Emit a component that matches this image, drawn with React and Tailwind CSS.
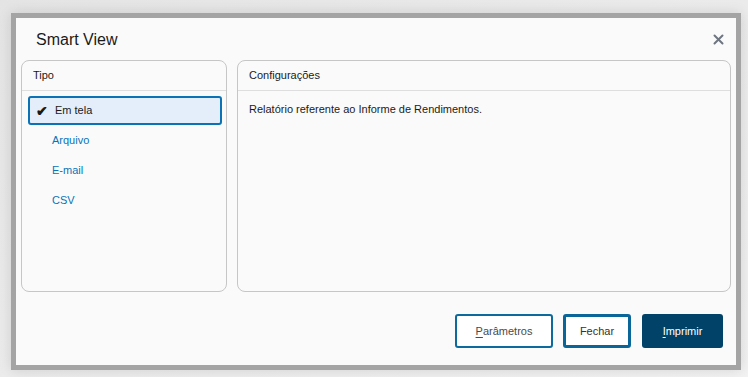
export default function App() {
  const items = ['Arquivo', 'E-mail', 'CSV'];

  return (
    <div
      className="w-[748px] h-[377px] bg-gradient-to-br from-[#e4e4e4] to-[#f2f2f2] pt-[13px] pl-[11px]"
      style={{ fontFamily: '"Liberation Sans", Arial, sans-serif' }}
    >
      {/* Dialog */}
      <div className="w-[730px] h-[357px] border-[5px] border-[#a4a4a4] bg-[#fafafa] flex flex-col shadow-[0_0_12px_rgba(0,0,0,0.12)]">
        {/* Header */}
        <div className="h-[42px] flex items-center justify-between pl-[20px] pr-[11px]">
          <h1 className="text-[16px] text-[#1a1a1a] leading-none pt-[2px]">Smart View</h1>
          <button className="w-[14px] h-[14px] flex items-center justify-center">
            <svg width="11" height="11" viewBox="0 0 11 11">
              <path d="M1.5 1.5 L9.5 9.5 M9.5 1.5 L1.5 9.5" stroke="#6e7580" strokeWidth="2" strokeLinecap="round" />
            </svg>
          </button>
        </div>

        {/* Panels */}
        <div className="flex gap-[10px] px-[5px]">
          {/* Tipo */}
          <div className="w-[206px] h-[232px] border border-[#c6c6c6] rounded-[8px] flex flex-col">
            <div className="h-[30px] flex items-center px-[11px] border-b border-[#dedede] text-[11px] text-[#1a1a1a]">
              Tipo
            </div>
            <div className="pl-[6px] pr-[4px] pt-[5px]">
              <div className="h-[29px] border-2 border-[#0b72b6] bg-[#e3eefa] rounded-[3px] flex items-center pl-[6px] text-[11px] text-[#1a1a1a]">
                <span className="w-[19px] text-[14px] leading-none font-bold">✔</span>
                <span>Em tela</span>
              </div>
              {items.map((item) => (
                <div key={item} className="h-[30px] flex items-center pl-[24px] text-[11px] text-[#0a72b8]">
                  {item}
                </div>
              ))}
            </div>
          </div>

          {/* Configurações */}
          <div className="w-[494px] h-[232px] border border-[#c6c6c6] rounded-[8px] flex flex-col">
            <div className="h-[30px] flex items-center px-[11px] border-b border-[#dedede] text-[11px] text-[#1a1a1a]">
              Configurações
            </div>
            <p className="px-[11px] pt-[10px] text-[11px] text-[#1a1a1a]">
              Relatório referente ao Informe de Rendimentos.
            </p>
          </div>
        </div>

        {/* Footer */}
        <div className="flex justify-end items-start gap-[10px] pt-[22px] pr-[13px]">
          <button className="w-[98px] h-[34px] border-2 border-[#0d6a9d] rounded-[3px] bg-white text-[11px] text-[#4a4a4a]">
            <span className="underline underline-offset-2">P</span>arâmetros
          </button>
          <button className="w-[68px] h-[34px] border-[3px] border-[#0a6699] rounded-[3px] bg-white text-[11px] text-[#333333]">
            Fechar
          </button>
          <button className="w-[81px] h-[34px] ml-[1px] rounded-[3px] bg-[#004268] text-[11px] text-white">
            <span className="underline underline-offset-2">I</span>mprimir
          </button>
        </div>
      </div>
    </div>
  );
}
